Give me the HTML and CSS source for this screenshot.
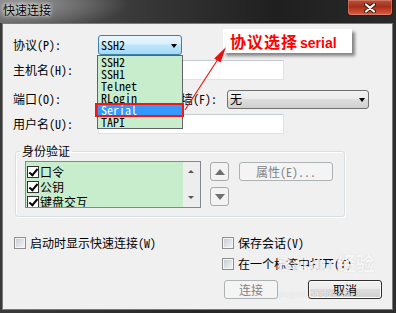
FILE: index.html
```html
<!DOCTYPE html>
<html>
<head>
<meta charset="utf-8">
<link rel="stylesheet" href="styles.css">
</head>
<body>
<div class="window">
  <div class="titlebar">
    <span class="title">快速连接</span>
    <span class="close"><svg width="12" height="10" viewBox="0 0 12 10"><path d="M2 1.5 L10 8.5 M10 1.5 L2 8.5" stroke="#3a1208" stroke-width="4" stroke-linecap="round"/><path d="M2 1.5 L10 8.5 M10 1.5 L2 8.5" stroke="#fff" stroke-width="2.2" stroke-linecap="round"/></svg></span>
  </div>
  <div class="client">
    <div class="row r1">
      <span class="lbl">协议(P):</span>
      <div class="combo active"><span>SSH2</span><i class="caret"></i>
        <ul class="droplist">
          <li>SSH2</li><li>SSH1</li><li>Telnet</li><li>RLogin</li><li class="sel">Serial</li><li>TAPI</li>
        </ul>
      </div>
    </div>
    <div class="row r2"><span class="lbl">主机名(H):</span><div class="input w-host"></div></div>
    <div class="row r3"><span class="lbl">端口(O):</span><div class="input w-port"></div><span class="lbl2">防火墙(F):</span><div class="combo plain"><span>无</span><i class="caret"></i></div></div>
    <div class="row r4"><span class="lbl">用户名(U):</span><div class="input w-host"></div></div>
    <fieldset class="group">
      <legend>身份验证</legend>
      <div class="auth">
        <div class="listbox">
          <ul class="checks">
            <li><span class="cb"></span>口令</li>
            <li><span class="cb"></span>公钥</li>
            <li><span class="cb"></span>键盘交互</li>
          </ul>
          <div class="vscroll"><i class="sup"></i><i class="sdown"></i></div>
        </div>
        <div class="movers">
          <span class="mv"><i class="tri-up"></i></span>
          <span class="mv"><i class="tri-down"></i></span>
        </div>
        <span class="btn disabled prop">属性(E)...</span>
      </div>
    </fieldset>
    <div class="options">
      <div class="col-left">
        <span class="chk"><span class="box"></span>启动时显示快速连接(W)</span>
      </div>
      <div class="col-right">
        <span class="chk"><span class="box"></span>保存会话(V)</span>
        <span class="chk"><span class="box"></span>在一个标签中打开(T)</span>
      </div>
    </div>
    <div class="buttons">
      <span class="btn disabled w-connect">连接</span>
      <span class="btn default w-cancel">取消</span>
    </div>
  </div>
  <div class="watermark"><span class="wm-big">Bai<b>du</b>经验</span><span class="wm-small">jingyan.baidu.com</span></div>
  <div class="callout">协议选择<span>serial</span></div>
  <svg class="pointer" width="396" height="313" viewBox="0 0 396 313">
    <line x1="185" y1="110" x2="220" y2="56" stroke="#e81010" stroke-width="1.1"/>
    <polygon points="226,47 220.6,62.6 214.2,58.4" fill="#e81010"/>
  </svg>
</div>
</body>
</html>
```

FILE: styles.css
```css
* { box-sizing: border-box; }
html, body { margin: 0; padding: 0; }
body {
  width: 396px;
  height: 313px;
  overflow: hidden;
  background: #222;
  font: 12px/14px "Noto Sans Mono CJK SC", "Noto Sans CJK SC", sans-serif;
  color: #000;
}
.window {
  position: relative;
  width: 396px;
  height: 313px;
  display: flex;
  flex-direction: column;
  background: linear-gradient(to right, #3a3a3a, #262626 50%, #2e2e2e);
}
.titlebar {
  height: 23px;
  flex: none;
  display: flex;
  justify-content: space-between;
  align-items: flex-start;
  background:
    radial-gradient(ellipse 110px 26px at 18px 4px, rgba(160,160,160,.9), rgba(140,140,140,0)),
    linear-gradient(to right, #5e5e5e, #383838 35%, #1f1f1f 70%, #2a2a2a);
}
.title {
  margin: 3px 0 0 3px;
  line-height: 14px;
  text-shadow: 0 0 5px #fff, 0 0 3px #eee;
}
.close {
  width: 46px;
  height: 16px;
  margin-right: 3px;
  border: 1px solid #3d130a;
  border-top: 0;
  border-radius: 0 0 4px 4px;
  display: flex;
  align-items: center;
  justify-content: center;
  background: linear-gradient(#b9533d, #a0301c 45%, #b8361c 55%, #d46246);
  box-shadow: inset 0 0 0 1px rgba(255,190,170,.35);
}
.client {
  flex: none;
  margin: 0 3px 3px 2px;
  height: 287px;
  border: 1px solid #7a7a7a;
  background: #f0f0f0;
  padding: 11px 0 0 10px;
}
.row { display: flex; align-items: center; height: 20px; }
.r2 { margin-top: 5px; }
.r3 { margin-top: 9px; }
.r4 { margin-top: 5px; }
.lbl { width: 85px; flex: none; }
.lbl2 { width: 70px; flex: none; margin-left: 7px; }
.input {
  height: 20px;
  background: #fff;
  border: 1px solid #dde2e8;
  border-top-color: #c6ccd4;
}
.w-host { width: 186px; }
.w-port { width: 52px; }
.combo {
  position: relative;
  height: 20px;
  border-radius: 3px;
  display: flex;
  align-items: center;
  padding-left: 2px;
}
.combo.active {
  width: 84px;
  border: 1px solid #3c7fb1;
  background: linear-gradient(#eaf6fd, #d9f0fc 45%, #bee6fd 50%, #a7d9f5);
}
.combo.plain {
  width: 142px;
  height: 19px;
  border: 1px solid #707070;
  background: linear-gradient(#f2f2f2, #ebebeb 45%, #dddddd 50%, #cfcfcf);
}
.caret {
  position: absolute;
  right: 4px;
  top: 8px;
  width: 0;
  height: 0;
  border-left: 3.5px solid transparent;
  border-right: 3.5px solid transparent;
  border-top: 4px solid #000;
}
.combo.plain .caret { top: 7px; right: 3px; }
.droplist {
  position: absolute;
  left: -2px;
  top: 19px;
  width: 86px;
  margin: 0;
  padding: 0;
  list-style: none;
  border: 1px solid #646464;
  background: #c7edcc;
  z-index: 2;
}
.droplist li {
  position: relative;
  height: 12px;
  line-height: 12px;
  padding-left: 3px;
}
.droplist li.sel { background: #3399ff; color: #fff; }
.droplist li.sel::after {
  content: "";
  position: absolute;
  left: -3px;
  right: -2px;
  top: -1px;
  bottom: -1px;
  border: 2px solid #f01818;
}
.group {
  margin: 10px 0 0 2px;
  width: 330px;
  min-inline-size: 0;
  padding: 3px 8px 8px 4px;
  border: 1px solid #d5dfe5;
  border-radius: 3px;
  box-shadow: inset 1px 1px 0 #fff, 1px 1px 0 #fff;
}
.group legend { padding: 0 2px; line-height: 14px; }
.auth { display: flex; align-items: flex-start; margin-left: 5px; }
.listbox {
  width: 176px;
  height: 47px;
  flex: none;
  display: flex;
  overflow: hidden;
  border: 1px solid #828790;
  background: #c7edcc;
}
.checks { flex: 1; margin: 0; padding: 2px 0 0 1px; list-style: none; }
.checks li { height: 15px; display: flex; align-items: center; gap: 1px; }
.cb {
  position: relative;
  width: 12px;
  height: 12px;
  flex: none;
  background: #fff;
  border: 1px solid #333;
}
.cb::after {
  content: "";
  position: absolute;
  left: 3px;
  top: 0px;
  width: 3px;
  height: 7px;
  border: solid #000;
  border-width: 0 2px 2px 0;
  transform: rotate(40deg);
}
.vscroll {
  width: 17px;
  flex: none;
  position: relative;
  background: #ededed;
}
.sup, .sdown {
  position: absolute;
  left: 5px;
  width: 0; height: 0;
  border-left: 3px solid transparent;
  border-right: 3px solid transparent;
}
.sup { top: 8px; border-bottom: 3px solid #555; }
.sdown { bottom: 8px; border-top: 3px solid #555; }
.movers { display: flex; flex-direction: column; gap: 6px; margin: 1px 0 0 9px; }
.mv {
  width: 19px;
  height: 19px;
  border: 1px solid #a9a9a9;
  border-radius: 3px;
  background: #f3f3f3;
  display: flex;
  align-items: center;
  justify-content: center;
}
.tri-up, .tri-down {
  width: 0; height: 0;
  border-left: 5.5px solid transparent;
  border-right: 5.5px solid transparent;
}
.tri-up { border-bottom: 6px solid #707070; }
.tri-down { border-top: 6px solid #707070; }
.btn {
  display: flex;
  align-items: center;
  justify-content: center;
  height: 19px;
  border: 1px solid #707070;
  border-radius: 3px;
  background: linear-gradient(#f2f2f2, #ebebeb 45%, #dddddd 50%, #cfcfcf);
}
.btn.disabled { border-color: #adb2b5; background: #f4f4f4; color: #838383; }
.prop { width: 94px; margin: 1px 0 0 10px; }
.options { display: flex; margin-top: 19px; padding-left: 1px; }
.col-left { width: 208px; flex: none; }
.col-right { display: flex; flex-direction: column; gap: 8px; }
.chk { display: flex; align-items: center; height: 13px; gap: 4px; }
.box {
  width: 12px;
  height: 12px;
  flex: none;
  border: 1px solid #8f8f8f;
  background: linear-gradient(135deg, #c4c9cf, #f7f7f7);
  box-shadow: inset 0 0 0 1px #f4f4f4;
}
.buttons { display: flex; justify-content: flex-end; gap: 30px; margin-top: 10px; padding-right: 10px; }
.w-connect { width: 54px; }
.w-cancel { width: 74px; border-color: #2f2f2f; box-shadow: inset 0 0 0 1px #fff; }
.callout {
  position: absolute;
  left: 223px;
  top: 29px;
  width: 129px;
  height: 24px;
  padding-left: 7px;
  background: #fff;
  box-shadow: 3px 3px 3px rgba(0,0,0,.45);
  color: #f00;
  font: bold 16px/24px "Noto Sans CJK SC", sans-serif;
  letter-spacing: 1px;
}
.callout span { font: bold 14px/24px "Liberation Sans", sans-serif; letter-spacing: 0; margin-left: 2px; }
.pointer { position: absolute; left: 0; top: 0; pointer-events: none; }
.watermark {
  position: absolute;
  left: 278px;
  top: 254px;
  display: flex;
  flex-direction: column;
  align-items: flex-start;
  color: rgba(255,255,255,.85);
  text-shadow: 0 0 1px rgba(0,0,0,.18);
  pointer-events: none;
}
.wm-big { font: bold 19px/22px "Liberation Sans", "Noto Sans CJK SC", sans-serif; }
.wm-big b { margin: 0 4px 0 2px; }
.wm-small { font: 9px/11px "Liberation Sans", sans-serif; margin-top: 13px; }
```
